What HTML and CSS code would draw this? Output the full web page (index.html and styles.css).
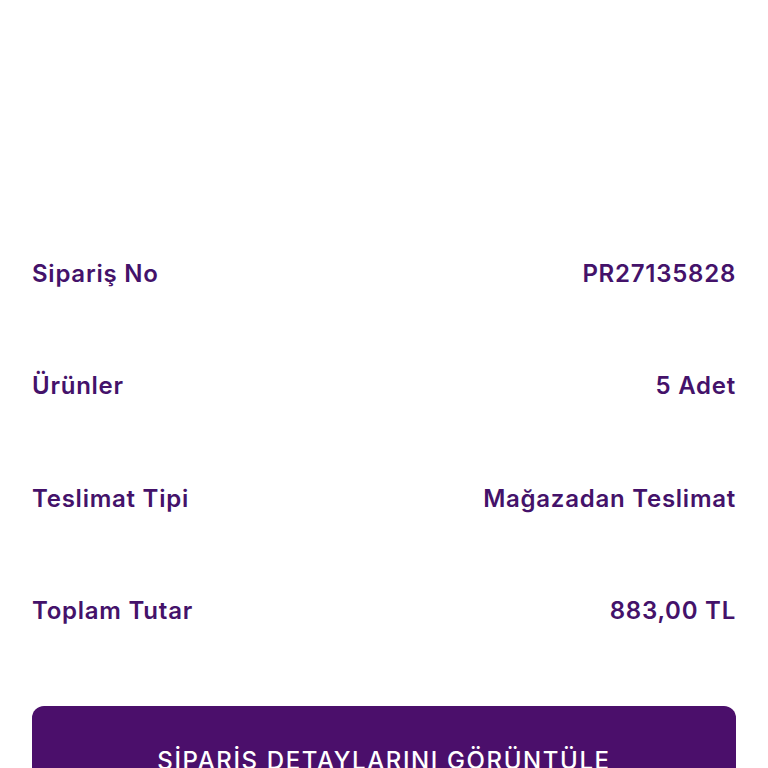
FILE: index.html
```html
<!DOCTYPE html>
<html>
<head>
<meta charset="utf-8">
<title>Sipariş Özeti</title>
<link rel="stylesheet" href="styles.css">
</head>
<body>
	<div class="page">
		<ul class="summary">
			<li><span>Sipariş No</span><span>PR27135828</span></li>
			<li><span>Ürünler</span><span>5 Adet</span></li>
			<li><span>Teslimat Tipi</span><span>Mağazadan Teslimat</span></li>
			<li><span>Toplam Tutar</span><span>883,00 TL</span></li>
		</ul>
		<a href="javascript:;" class="btn">SİPARİŞ DETAYLARINI GÖRÜNTÜLE</a>
	</div>
</body>
</html>
```
FILE: styles.css
```css
*{margin:0; padding:0; text-decoration:none; list-style:none; box-sizing:border-box;}
body{background:#fff; font-family:"Inter","Noto Sans",sans-serif;}
.page{padding:217px 32px 0;}
/*订单信息*/
.summary li{height:112.5px; display:flex; justify-content:space-between; align-items:center; font-size:24px; font-weight:600; color:#44126a; letter-spacing:0.75px;}
/*按钮*/
.btn{display:flex; justify-content:center; align-items:center; height:104px; margin-top:39px; background:#4b0f6b; border-radius:12px; color:#fff; font-size:24px; font-weight:500; letter-spacing:1.6px; padding-top:4px;}
```
